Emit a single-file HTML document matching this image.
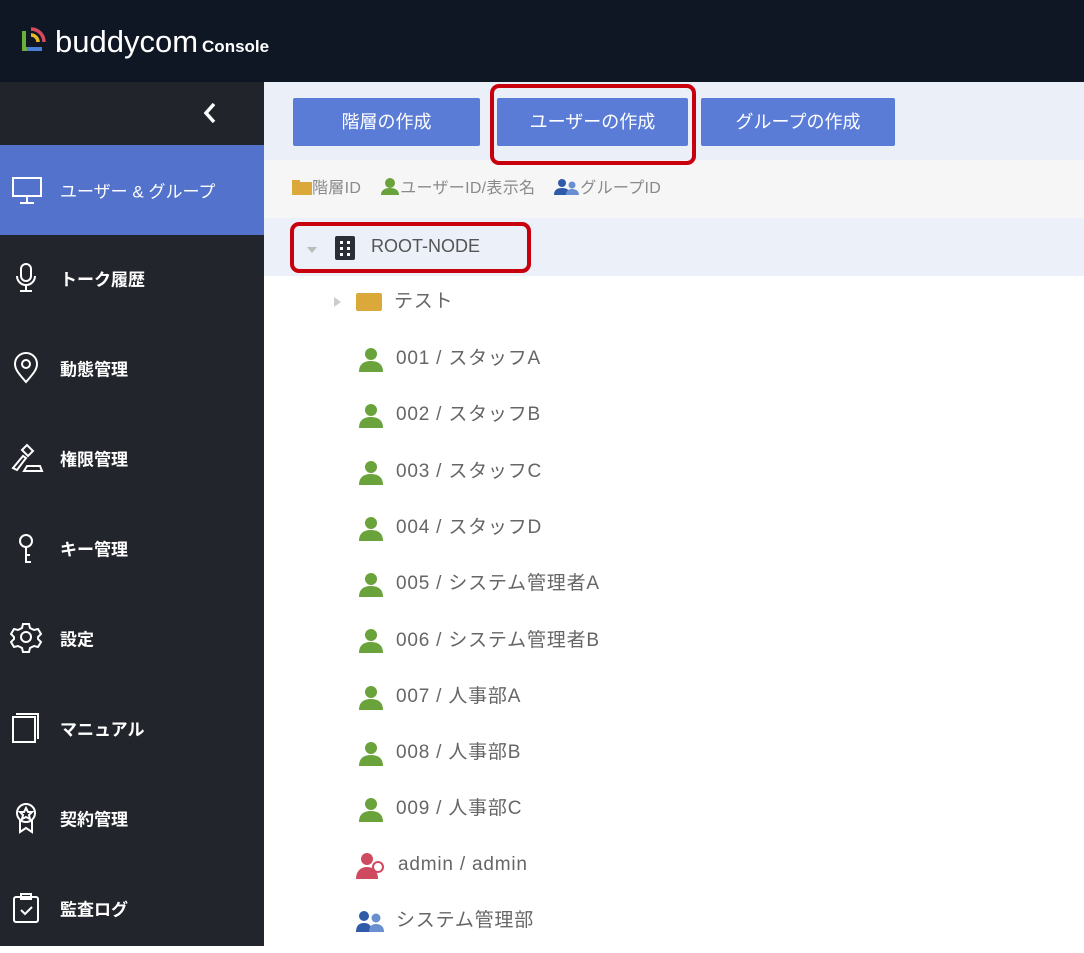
<!DOCTYPE html>
<html><head><meta charset="utf-8"><style>
*{margin:0;padding:0;box-sizing:border-box}
body{width:1084px;height:946px;overflow:hidden;font-family:"Liberation Sans","Noto Sans CJK JP",sans-serif;background:#fff;position:relative}
.hdr{position:absolute;left:0;top:0;width:1084px;height:82px;background:#0f1624}
.logo{position:absolute;left:55px;top:24px;color:#fff;font-size:31px;font-weight:normal}
.logo small{font-size:17px;font-weight:bold;margin-left:4px}
.side{position:absolute;left:0;top:82px;width:264px;height:864px;background:#22252c}
.coll{position:absolute;left:0;top:0;width:264px;height:63px;background:#21242a;color:#fff;font-size:30px}
.item{position:absolute;left:0;width:264px;height:90px;color:#fff;font-size:17px;font-weight:bold}
.item span{position:absolute;left:60px;top:50%;transform:translateY(-50%)}
.item svg{position:absolute;left:10px;top:50%;transform:translateY(-50%)}
.act{background:#5272cc;font-weight:normal}
.main{position:absolute;left:264px;top:82px;width:820px;height:864px}
.tb{position:absolute;left:0;top:0;width:820px;height:78px;background:#eaeff8}
.btn{position:absolute;top:16px;height:48px;background:#5a7cd6;color:#fff;font-size:18px;text-align:center;line-height:48px;border-radius:2px}
.flt{position:absolute;left:0;top:78px;width:820px;height:58px;background:#f6f6f6;color:#8a8a8a;font-size:16px}
.root{position:absolute;left:0;top:136px;width:820px;height:58px;background:#ecf0f8}
.row{position:absolute;height:30px;color:#666;font-size:19px;line-height:30px;letter-spacing:0.8px}
.red{position:absolute;border:4px solid #c8000e;border-radius:9px}
.fi{vertical-align:-2px}
</style></head><body>
<div class="hdr">
<svg style="position:absolute;left:21px;top:25px" width="26" height="28" viewBox="0 0 26 28"><path d="M3 6v18h18" stroke="#6aae3c" stroke-width="4" fill="none"/><path d="M6 24h15" stroke="#4a7ed4" stroke-width="4"/><path d="M10 4a13 13 0 0 1 13 13" stroke="#d84b5c" stroke-width="3.5" fill="none"/><path d="M10 10a7 7 0 0 1 7 7" stroke="#e8b828" stroke-width="3.5" fill="none"/></svg>
<div class="logo">buddycom<small>Console</small></div>
</div>
<div class="side">
<div class="coll"><svg style="position:absolute;left:202px;top:19px" width="16" height="24"><path d="M12 3L4 12l8 9" stroke="#fff" stroke-width="3.5" fill="none"/></svg></div>
<div class="item act" style="top:63px"><svg width="34" height="34" viewBox="0 0 34 34" fill="none" stroke="#fff" stroke-width="2"><rect x="3" y="5" width="28" height="18"/><path d="M17 23v6M10 30h14"/></svg><span>ユーザー &amp; グループ</span></div>
<div class="item" style="top:151px"><svg width="34" height="34" viewBox="0 0 34 34" fill="none" stroke="#fff" stroke-width="2"><rect x="11" y="3" width="10" height="17" rx="5"/><path d="M7 15a9 9 0 0 0 18 0M16 24v6M10 30h12"/></svg><span>トーク履歴</span></div>
<div class="item" style="top:241px"><svg width="34" height="34" viewBox="0 0 34 34" fill="none" stroke="#fff" stroke-width="2"><path d="M16 31C8 22 5 18 5 13a11 11 0 0 1 22 0c0 5-3 9-11 18z"/><circle cx="16" cy="13" r="4"/></svg><span>動態管理</span></div>
<div class="item" style="top:331px"><svg width="34" height="34" viewBox="0 0 34 34" fill="none" stroke="#fff" stroke-width="2"><path d="M3 27l10-12 3 2-9 12zM12 9l5-5 6 6-5 5zM14 30h18l-2-5H17z"/></svg><span>権限管理</span></div>
<div class="item" style="top:421px"><svg width="34" height="34" viewBox="0 0 34 34" fill="none" stroke="#fff" stroke-width="2"><circle cx="16" cy="10" r="6"/><path d="M16 16v15h5M16 24h4"/></svg><span>キー管理</span></div>
<div class="item" style="top:511px"><svg width="34" height="34" viewBox="0 0 34 34" fill="none" stroke="#fff" stroke-width="2"><path d="M13 3h6l1 4 4 2 4-1 3 5-3 3v2l3 3-3 5-4-1-4 2-1 4h-6l-1-4-4-2-4 1-3-5 3-3v-2l-3-3 3-5 4 1 4-2z"/><circle cx="16" cy="16" r="5"/></svg><span>設定</span></div>
<div class="item" style="top:601px"><svg width="34" height="34" viewBox="0 0 34 34" fill="none" stroke="#fff" stroke-width="2"><rect x="3" y="6" width="22" height="25"/><path d="M6 3h22v25"/></svg><span>マニュアル</span></div>
<div class="item" style="top:691px"><svg width="34" height="34" viewBox="0 0 34 34" fill="none" stroke="#fff" stroke-width="2"><circle cx="16" cy="12" r="9"/><path d="M16 7l2 4h4l-3 3 1 4-4-2-4 2 1-4-3-3h4zM10 19v12l6-4 6 4V19"/></svg><span>契約管理</span></div>
<div class="item" style="top:781px"><svg width="34" height="34" viewBox="0 0 34 34" fill="none" stroke="#fff" stroke-width="2"><rect x="4" y="6" width="24" height="25" rx="2"/><rect x="11" y="3" width="10" height="5"/><path d="M11 19l4 4 7-7"/></svg><span>監査ログ</span></div>
</div>
<div class="main">
<div class="tb">
<div class="btn" style="left:29px;width:187px">階層の作成</div>
<div class="btn" style="left:233px;width:191px">ユーザーの作成</div>
<div class="btn" style="left:437px;width:194px">グループの作成</div>
</div>
<div class="flt">
<div style="position:absolute;left:28px;top:18px;line-height:22px;letter-spacing:0.3px"><svg class="fi" width="20" height="15"><rect y="2" width="20" height="13" fill="#dba93a"/><rect width="8" height="4" fill="#dba93a"/></svg>階層ID&nbsp;&nbsp;&nbsp;&nbsp;<svg class="fi" width="20" height="17" viewBox="0 0 20 17"><circle cx="10" cy="5" r="5" fill="#6aa23c"/><path d="M1 17c0-5 4-7 9-7s9 2 9 7z" fill="#6aa23c"/></svg>ユーザーID/表示名&nbsp;&nbsp;&nbsp;&nbsp;<svg class="fi" width="26" height="16" viewBox="0 0 26 16"><circle cx="8" cy="4" r="4" fill="#2f5aa8"/><path d="M0 16c0-5 3-7 8-7s8 2 8 7z" fill="#2f5aa8"/><circle cx="18" cy="6" r="3.5" fill="#6a8fd0"/><path d="M12 16c0-4 2-6 6-6s7 2 7 6z" fill="#6a8fd0"/></svg>グループID</div>
</div>
<div class="root">
<svg style="position:absolute;left:43px;top:29px" width="10" height="6"><path d="M0 0h10L5 6z" fill="#bbb"/></svg>
<svg style="position:absolute;left:71px;top:18px" width="20" height="24"><rect width="20" height="24" rx="2" fill="#2a2e36"/><g fill="#fff"><rect x="5" y="5" width="3" height="3"/><rect x="12" y="5" width="3" height="3"/><rect x="5" y="11" width="3" height="3"/><rect x="12" y="11" width="3" height="3"/><rect x="5" y="17" width="3" height="3"/><rect x="12" y="17" width="3" height="3"/></g></svg>
<div style="position:absolute;left:107px;top:18px;color:#555;font-size:18px">ROOT-NODE</div>
</div>
<div class="row" style="left:70px;top:205px"><svg width="10" height="14" style="vertical-align:middle;margin-right:12px"><path d="M0 2l7 5-7 5z" fill="#ccc"/></svg><span style="display:inline-block;width:26px;height:18px;background:#dba93a;border-radius:2px;vertical-align:middle;margin-right:12px"></span>テスト</div>
<div id="rows"></div>
</div>
<div class="red" style="left:490px;top:84px;width:206px;height:81px"></div>
<div class="red" style="left:290px;top:222px;width:241px;height:51px"></div>
<script>
var n=["001 / スタッフA","002 / スタッフB","003 / スタッフC","004 / スタッフD","005 / システム管理者A","006 / システム管理者B","007 / 人事部A","008 / 人事部B","009 / 人事部C"],h="";
var u='<svg width="26" height="26" viewBox="0 0 26 26" style="vertical-align:middle;margin-right:12px"><circle cx="13" cy="8" r="6" fill="#6aa23c"/><path d="M1 26c0-8 5-11 12-11s12 3 12 11z" fill="#6aa23c"/></svg>';
for(var i=0;i<9;i++)h+='<div class="row" style="left:94px;top:'+(262+56.3*i)+'px">'+u+n[i]+'</div>';
h+='<div class="row" style="left:92px;top:768px"><svg width="30" height="28" viewBox="0 0 30 28" style="vertical-align:middle;margin-right:12px"><circle cx="11" cy="8" r="6" fill="#cf4a5e"/><path d="M0 28c0-8 5-12 11-12s11 4 11 12z" fill="#cf4a5e"/><circle cx="22" cy="16" r="5" fill="#fff" stroke="#cf4a5e" stroke-width="2"/></svg>admin / admin</div>';
h+='<div class="row" style="left:92px;top:824px"><svg width="28" height="22" viewBox="0 0 28 22" style="vertical-align:middle;margin-right:12px"><circle cx="8" cy="6" r="5" fill="#2f5aa8"/><path d="M0 22c0-7 4-9 8-9s8 2 8 9z" fill="#2f5aa8"/><circle cx="20" cy="8" r="4.5" fill="#6a8fd0"/><path d="M13 22c0-6 3-8 7-8s8 2 8 8z" fill="#6a8fd0"/></svg>システム管理部</div>';
document.getElementById('rows').innerHTML=h;
</script>
</body></html>
